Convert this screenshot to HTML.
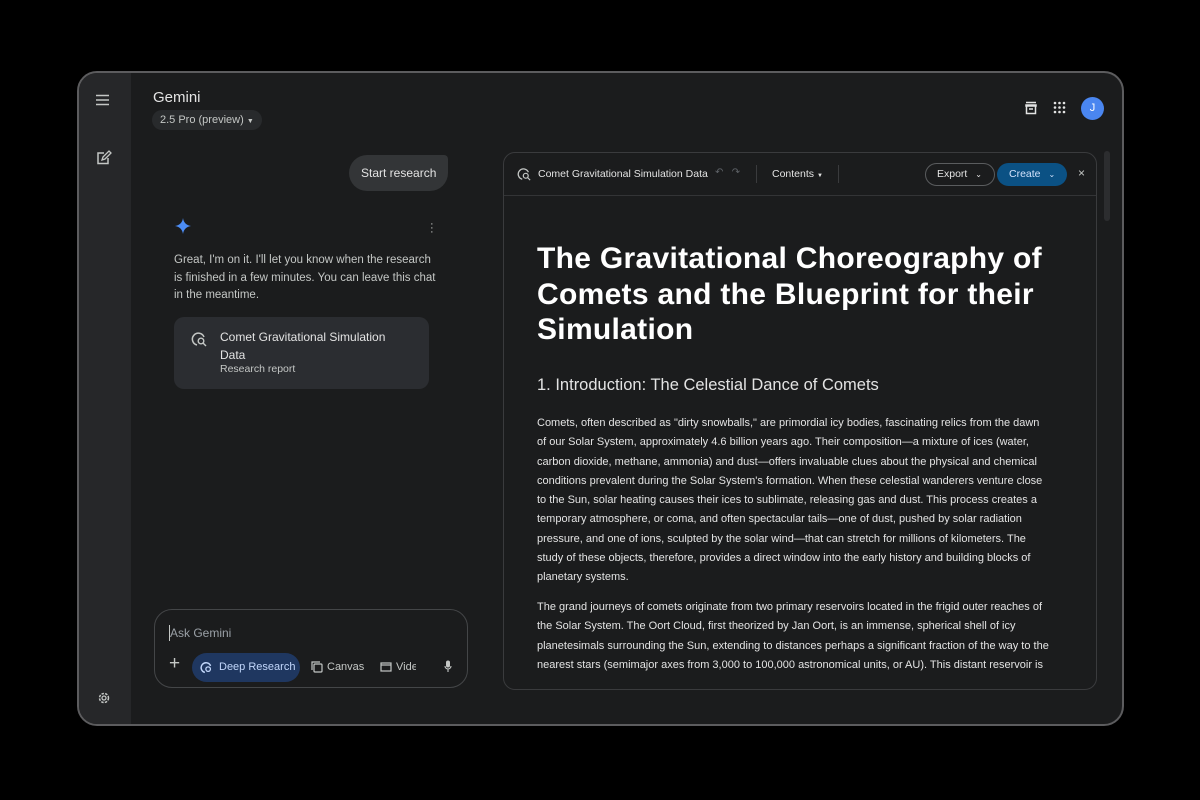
<!DOCTYPE html>
<html><head><meta charset="utf-8"><style>
*{margin:0;padding:0;box-sizing:border-box}
body{width:1200px;height:800px;background:#000;font-family:"Liberation Sans",sans-serif;position:relative;overflow:hidden;color:#e3e3e3}
.frame{position:absolute;left:77px;top:71px;width:1047px;height:655px;border:2px solid #5c5c5e;border-radius:20px;background:#1b1c1d;overflow:hidden}
.side{position:absolute;left:0;top:0;width:52px;height:100%;background:#262729}
.w{position:absolute;left:-2px;top:-2px;width:1047px;height:655px}
.a{position:absolute}
.nw{white-space:nowrap}
.panel{position:absolute;left:426px;top:81px;width:594px;height:538px;border:1px solid #3a3b3d;border-radius:12px;overflow:hidden;background:#1b1c1d}
.hdr{position:absolute;left:0;top:0;width:100%;height:43px;border-bottom:1px solid #333436}
.body p{font-size:11px;line-height:19.3px;color:#e3e3e3;white-space:nowrap}
</style></head><body>
<div class="frame">
 <div class="side"></div>
 <div class="w">
  <svg class="a" style="left:18px;top:23px" width="16" height="12" viewBox="0 0 16 12"><path d="M1 1.5h13M1 6h13M1 10.5h13" stroke="#c4c7c5" stroke-width="1.6"/></svg>
  <svg class="a" style="left:19px;top:79px" width="16" height="16" viewBox="0 0 16 16"><path d="M12 8v5.5H2V3h6" fill="none" stroke="#c4c7c5" stroke-width="1.5"/><path d="M6 10l1-3 6-6 2 2-6 6z" fill="none" stroke="#c4c7c5" stroke-width="1.3"/></svg>
  <svg class="a" style="left:20px;top:620px" width="14" height="14" viewBox="0 0 14 14"><circle cx="7" cy="7" r="4.5" fill="none" stroke="#c4c7c5" stroke-width="1.5" stroke-dasharray="2.5 1.2"/><circle cx="7" cy="7" r="2" fill="none" stroke="#c4c7c5" stroke-width="1.3"/></svg>
 <div class="a nw" style="left:76px;top:18px;font-size:15px;color:#e3e3e3">Gemini</div>
 <div class="a nw" style="left:75px;top:39px;height:20px;padding:0 8px;border-radius:10px;background:#282a2c;font-size:11px;line-height:20px;color:#c4c7c5">2.5 Pro (preview) <span style="font-size:7px">▼</span></div>
 <svg class="a" style="left:947px;top:30px" width="14" height="14" viewBox="0 0 14 14"><path d="M2 1.5h10M2 4h10v1H2zM2.5 5.5v7h9v-7M5 8h4" fill="none" stroke="#e3e3e3" stroke-width="1.5"/></svg>
 <svg class="a" style="left:976px;top:30px" width="13" height="13" viewBox="0 0 13 13" fill="#e3e3e3"><circle cx="2" cy="2" r="1.3"/><circle cx="6.5" cy="2" r="1.3"/><circle cx="11" cy="2" r="1.3"/><circle cx="2" cy="6.5" r="1.3"/><circle cx="6.5" cy="6.5" r="1.3"/><circle cx="11" cy="6.5" r="1.3"/><circle cx="2" cy="11" r="1.3"/><circle cx="6.5" cy="11" r="1.3"/><circle cx="11" cy="11" r="1.3"/></svg>
 <div class="a" style="left:1004px;top:26px;width:23px;height:23px;border-radius:50%;background:#4a86f0;color:#fff;font-size:11px;text-align:center;line-height:23px">J</div>
 <div class="a nw" style="left:272px;top:84px;height:36px;padding:0 12px;border-radius:18px 4px 18px 18px;background:#333537;font-size:12px;line-height:36px;color:#e3e3e3">Start research</div>
 <svg class="a" style="left:98px;top:147px" width="16" height="16" viewBox="0 0 16 16"><path d="M8 0C8.6 4.5 11.5 7.4 16 8 11.5 8.6 8.6 11.5 8 16 7.4 11.5 4.5 8.6 0 8 4.5 7.4 7.4 4.5 8 0z" fill="#4c8df6"/></svg>
 <div class="a" style="left:353px;top:151px;font-size:11px;color:#c4c7c5;line-height:4px">·<br>·<br>·</div>
 <div class="a nw" style="left:97px;top:181px;font-size:11.5px;line-height:17.5px;color:#c4c7c5">Great, I'm on it. I'll let you know when the research<br>is finished in a few minutes. You can leave this chat<br>in the meantime.</div>
 <div class="a" style="left:97px;top:246px;width:255px;height:72px;border-radius:10px;background:#2b2d31"></div>
 <svg class="a" style="left:114px;top:260px" width="16" height="16" viewBox="0 0 16 16"><path d="M13 6A6 6 0 1 0 6 14" fill="none" stroke="#c4c7c5" stroke-width="1.5"/><circle cx="10" cy="10" r="2.8" fill="none" stroke="#c4c7c5" stroke-width="1.4"/><path d="M12 12l3 3" stroke="#c4c7c5" stroke-width="1.4"/></svg>
 <div class="a nw" style="left:143px;top:257px;font-size:12px;line-height:18px;color:#e3e3e3">Comet Gravitational Simulation<br>Data</div>
 <div class="a nw" style="left:143px;top:292px;font-size:10.5px;color:#c4c7c5">Research report</div>
 <div class="a" style="left:77px;top:538px;width:314px;height:79px;border:1px solid #444648;border-radius:18px"></div>
 <div class="a" style="left:92px;top:554px;width:1px;height:16px;background:#c4c7c5"></div>
 <div class="a nw" style="left:93px;top:555px;font-size:12px;color:#9aa0a6">Ask Gemini</div>
 <div class="a" style="left:92px;top:583px;font-size:19px;color:#c4c7c5;line-height:20px">+</div>
 <div class="a nw" style="left:115px;top:582px;width:108px;height:29px;border-radius:15px;background:#1f3760;font-size:11px;line-height:29px;color:#c2d7fb;padding-left:27px">Deep Research</div>
 <svg class="a" style="left:123px;top:590px" width="13" height="13" viewBox="0 0 16 16"><path d="M13 6A6 6 0 1 0 6 14" fill="none" stroke="#c2d7fb" stroke-width="1.8"/><circle cx="10" cy="10" r="2.8" fill="none" stroke="#c2d7fb" stroke-width="1.6"/></svg>
 <svg class="a" style="left:234px;top:590px" width="12" height="12" viewBox="0 0 12 12"><rect x="3" y="3" width="8" height="8" rx="1" fill="none" stroke="#c4c7c5" stroke-width="1.2"/><path d="M1 9V1h8" fill="none" stroke="#c4c7c5" stroke-width="1.2"/></svg>
 <div class="a nw" style="left:250px;top:590px;font-size:11px;color:#c4c7c5">Canvas</div>
 <svg class="a" style="left:303px;top:591px" width="12" height="10" viewBox="0 0 12 10"><rect x="1" y="1" width="10" height="8" fill="none" stroke="#c4c7c5" stroke-width="1.2"/><path d="M1 3h10" stroke="#c4c7c5" stroke-width="1.2"/></svg>
 <div class="a nw" style="left:319px;top:590px;font-size:11px;color:#c4c7c5;width:20px;overflow:hidden">Video</div>
 <svg class="a" style="left:367px;top:589px" width="8" height="13" viewBox="0 0 8 13"><rect x="2" y="0.5" width="4" height="7" rx="2" fill="#c4c7c5"/><path d="M1 6a3 3 0 0 0 6 0M4 9v3" fill="none" stroke="#c4c7c5" stroke-width="1.1"/></svg>
 <div class="a" style="left:1027px;top:80px;width:6px;height:70px;border-radius:3px;background:#2c2d2f"></div>
 <div class="panel">
  <div class="hdr">
   <svg class="a" style="left:13px;top:14px" width="14" height="14" viewBox="0 0 16 16"><path d="M13 6A6 6 0 1 0 6 14" fill="none" stroke="#c4c7c5" stroke-width="1.5"/><circle cx="10" cy="10" r="2.8" fill="none" stroke="#c4c7c5" stroke-width="1.4"/><path d="M12 12l3 3" stroke="#c4c7c5" stroke-width="1.4"/></svg>
   <div class="a nw" style="left:34px;top:15px;font-size:10.5px;color:#e3e3e3">Comet Gravitational Simulation Data</div>
   <div class="a nw" style="left:211px;top:14px;font-size:10px;color:#5f6368">↶&nbsp;&nbsp;&nbsp;↷</div>
   <div class="a" style="left:252px;top:12px;width:1px;height:18px;background:#3a3b3d"></div>
   <div class="a nw" style="left:268px;top:15px;font-size:10.5px;color:#e3e3e3">Contents <span style="font-size:6px">▼</span></div>
   <div class="a" style="left:334px;top:12px;width:1px;height:18px;background:#3a3b3d"></div>
   <div class="a nw" style="left:421px;top:10px;width:70px;height:23px;border:1px solid #5a5c5e;border-radius:12px;font-size:10.5px;line-height:21px;color:#e3e3e3;padding-left:11px">Export <span style="font-size:8px;margin-left:5px">⌄</span></div>
   <div class="a nw" style="left:493px;top:10px;width:70px;height:23px;background:#0b5184;border-radius:12px;font-size:10.5px;line-height:23px;color:#d3e3fd;padding-left:12px">Create <span style="font-size:8px;margin-left:5px">⌄</span></div>
   <div class="a" style="left:574px;top:13px;font-size:12px;color:#c4c7c5">×</div>
  </div>
  <div class="a body" style="left:33px;top:0">
   <div class="a nw" style="left:0;top:88px;font-size:30px;font-weight:bold;line-height:35.5px;color:#fff;letter-spacing:0.3px">The Gravitational Choreography of<br>Comets and the Blueprint for their<br>Simulation</div>
   <div class="a nw" style="left:0;top:223px;font-size:16.5px;color:#e3e3e3">1. Introduction: The Celestial Dance of Comets</div>
   <div class="a" style="left:0;top:261px">
    <p>Comets, often described as "dirty snowballs," are primordial icy bodies, fascinating relics from the dawn</p>
    <p>of our Solar System, approximately 4.6 billion years ago. Their composition—a mixture of ices (water,</p>
    <p>carbon dioxide, methane, ammonia) and dust—offers invaluable clues about the physical and chemical</p>
    <p>conditions prevalent during the Solar System's formation. When these celestial wanderers venture close</p>
    <p>to the Sun, solar heating causes their ices to sublimate, releasing gas and dust. This process creates a</p>
    <p>temporary atmosphere, or coma, and often spectacular tails—one of dust, pushed by solar radiation</p>
    <p>pressure, and one of ions, sculpted by the solar wind—that can stretch for millions of kilometers. The</p>
    <p>study of these objects, therefore, provides a direct window into the early history and building blocks of</p>
    <p>planetary systems.</p>
   </div>
   <div class="a" style="left:0;top:445px">
    <p>The grand journeys of comets originate from two primary reservoirs located in the frigid outer reaches of</p>
    <p>the Solar System. The Oort Cloud, first theorized by Jan Oort, is an immense, spherical shell of icy</p>
    <p>planetesimals surrounding the Sun, extending to distances perhaps a significant fraction of the way to the</p>
    <p>nearest stars (semimajor axes from 3,000 to 100,000 astronomical units, or AU). This distant reservoir is</p>
   </div>
  </div>
 </div>
 </div>
</div>
</body></html>
